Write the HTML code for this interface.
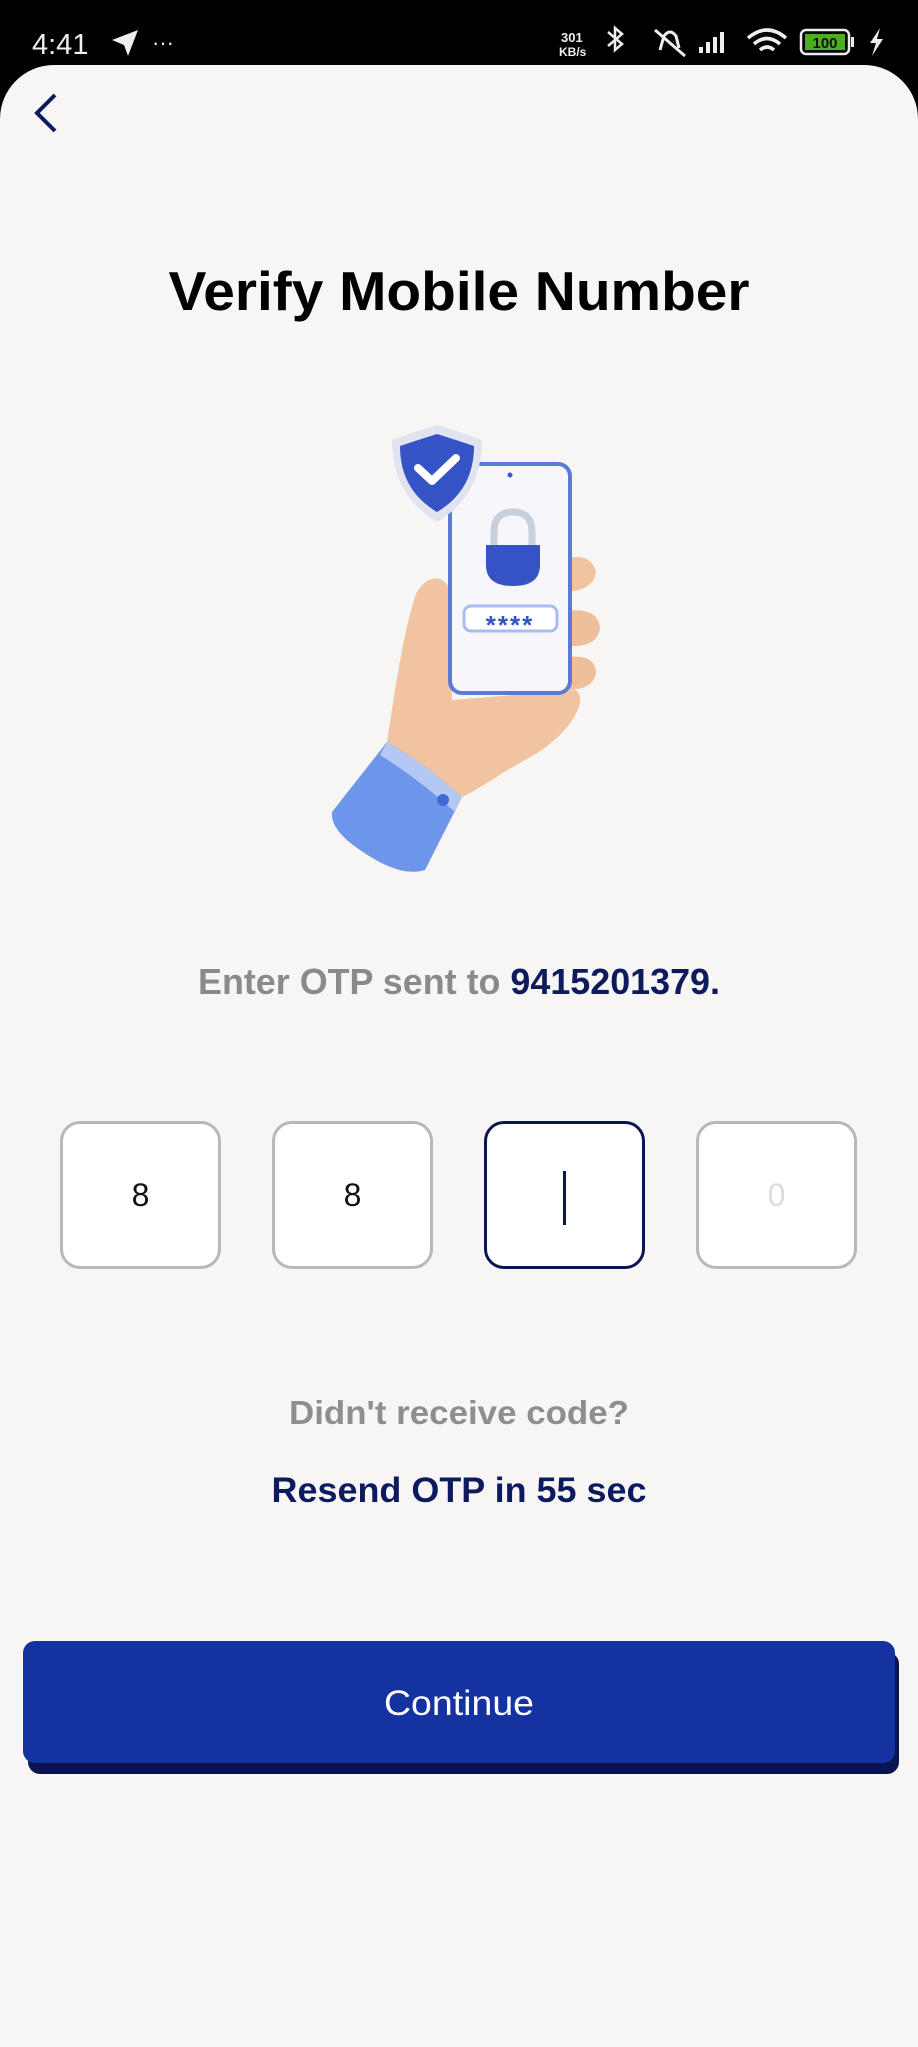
<!DOCTYPE html>
<html><head><meta charset="utf-8"><style>
html,body{margin:0;padding:0;width:918px;height:2047px;background:#000;overflow:hidden;font-family:"Liberation Sans",Arial,sans-serif}
.card{position:absolute;left:0;top:65px;width:918px;height:1982px;background:#f8f6f4;border-radius:54px 54px 0 0}
.box{position:absolute;top:1121px;width:155px;height:142px;border:3px solid #b8b8b8;border-radius:20px;background:#fff;text-align:center;line-height:142px;font-size:32px;color:#111}
</style></head><body>
<svg width="918" height="65" style="position:absolute;left:0;top:0">
<text x="32" y="54" fill="#eee" font-size="29" font-family="Liberation Sans">4:41</text>
<path d="M112,40 L138,30 L128,56 L124,45 Z" fill="#eee"/>
<text x="152" y="50" fill="#eee" font-size="22">···</text>
<text x="561" y="42" fill="#eee" font-size="13" font-weight="bold">301</text>
<text x="559" y="56" fill="#eee" font-size="12" font-weight="bold">KB/s</text>
<path d="M608,32 L622,44 L615,50 L615,28 L622,34 L608,46" stroke="#eee" stroke-width="2.5" fill="none"/>
<path d="M655,30 L685,56 M660,50 L664,36 Q670,28 676,36 L679,48" stroke="#eee" stroke-width="3" fill="none"/>
<rect x="699" y="47" width="4" height="6" fill="#eee"/><rect x="706" y="42" width="4" height="11" fill="#eee"/><rect x="713" y="37" width="4" height="16" fill="#eee"/><rect x="720" y="32" width="4" height="21" fill="#eee"/>
<path d="M748,38 Q767,22 786,38 M754,44 Q767,33 780,44 M760,50 Q767,44 774,50" stroke="#eee" stroke-width="3.5" fill="none"/>
<rect x="801" y="30" width="48" height="24" rx="5" fill="none" stroke="#eee" stroke-width="2.5"/>
<rect x="805" y="34" width="40" height="16" fill="#4caf20"/>
<text x="825" y="48" fill="#111" font-size="15" text-anchor="middle" font-weight="bold">100</text>
<rect x="851" y="37" width="3" height="10" fill="#eee"/>
<path d="M880,28 L870,43 L876,43 L872,56 L883,39 L877,39 Z" fill="#eee"/>
</svg>
<div class="card"></div>
<svg width="918" height="2047" style="position:absolute;left:0;top:0">
<path d="M55,95 L37,113 L55,131" stroke="#0d1b5e" stroke-width="4" fill="none"/>
<text x="459" y="310" text-anchor="middle" font-size="55" font-weight="bold" fill="#000" textLength="581" lengthAdjust="spacingAndGlyphs">Verify Mobile Number</text>
<!-- illustration -->
<path d="M387,742 C395,690 402,640 414,600 C420,578 442,570 450,590 L452,700 L575,690 C592,700 565,740 525,760 C498,775 478,790 462,797 Z" fill="#f1c3a0"/>
<path d="M560,560 Q590,550 596,572 Q594,590 566,592 Z" fill="#f1c3a0"/>
<path d="M560,612 Q598,605 600,628 Q598,648 566,646 Z" fill="#efbf9b"/>
<path d="M560,658 Q595,652 596,672 Q594,690 566,690 Z" fill="#efbf9b"/>
<rect x="450" y="464" width="120" height="229" rx="12" fill="#f7f7fb" stroke="#5a7ad6" stroke-width="4"/>
<circle cx="510" cy="475" r="2.5" fill="#3a5bc8"/>
<path d="M494,548 L494,532 Q494,512 513,512 Q532,512 532,532 L532,548" stroke="#c9cfdc" stroke-width="7" fill="none"/>
<path d="M486,545 L540,545 L540,565 Q540,586 513,586 Q486,586 486,565 Z" fill="#3553c4"/>
<rect x="464" y="606" width="93" height="25" rx="7" fill="#fff" stroke="#a9bcef" stroke-width="3"/>
<text x="510" y="634" text-anchor="middle" font-size="26" font-weight="bold" fill="#3553c4" letter-spacing="2">****</text>
<path d="M437,425 Q460,432 482,440 Q482,495 437,522 Q392,495 392,440 Q414,432 437,425 Z" fill="#dfe4f0"/>
<path d="M437,434 Q456,440 474,446 Q474,490 437,512 Q400,490 400,446 Q418,440 437,434 Z" fill="#3553c4"/>
<path d="M418,468 L432,481 L456,458" stroke="#fff" stroke-width="8" fill="none" stroke-linecap="round" stroke-linejoin="round"/>
<path d="M387,742 Q420,760 462,797 L425,870 Q400,878 360,850 Q330,830 332,812 Z" fill="#6d95ea"/>
<path d="M387,742 Q420,760 462,797 L455,812 Q420,780 380,755 Z" fill="#b3c9f4"/>
<circle cx="443" cy="800" r="6" fill="#3f6bd6"/>
<text x="459" y="994" text-anchor="middle" font-size="36" font-weight="bold" textLength="522" lengthAdjust="spacingAndGlyphs"><tspan fill="#8a8a8a">Enter OTP sent to </tspan><tspan fill="#0d1b5e">9415201379.</tspan></text>
</svg>
<div class="box" style="left:60px">8</div>
<div class="box" style="left:272px">8</div>
<div class="box" style="left:484px;border-color:#0a1650"><span style="display:inline-block;width:3px;height:54px;background:#0a1650;vertical-align:middle"></span></div>
<div class="box" style="left:696px;color:#ddd">0</div>
<svg width="918" height="2047" style="position:absolute;left:0;top:0">
<text x="459" y="1424" text-anchor="middle" font-size="33" font-weight="bold" fill="#8e8e8e" textLength="340" lengthAdjust="spacingAndGlyphs">Didn't receive code?</text>
<text x="459" y="1502" text-anchor="middle" font-size="35" font-weight="bold" fill="#0d1b5e" textLength="375" lengthAdjust="spacingAndGlyphs">Resend OTP in 55 sec</text>
<rect x="28" y="1652" width="871" height="122" rx="12" fill="#0a1450"/>
<rect x="23" y="1641" width="872" height="122" rx="12" fill="#1432a0"/>
<text x="459" y="1715" text-anchor="middle" font-size="35" fill="#fff" textLength="150" lengthAdjust="spacingAndGlyphs">Continue</text>
</svg>
</body></html>
